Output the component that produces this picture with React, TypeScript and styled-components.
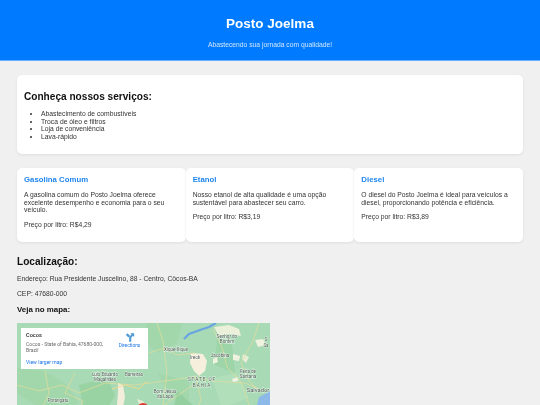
import styled, { createGlobalStyle } from "styled-components";

const GlobalStyle = createGlobalStyle`
  html, body {
    margin: 0;
    height: 405px;
    overflow: hidden;
    background: #f0f0f0;
    font-family: "Liberation Sans", Arial, sans-serif;
    color: #333;
  }
  #root {
    will-change: transform;
  }
`;

const Header = styled.header`
  background: #007bff;
  color: #fff;
  height: 61px;
  text-align: center;
  box-sizing: border-box;
  padding-top: 15px;
  border-bottom: 1px solid #66afff;
`;
const Title = styled.h1`
  margin: 0;
  font-size: 13.5px;
  line-height: 17px;
`;
const Tagline = styled.p`
  margin: 9px 0 0;
  font-size: 6.75px;
  line-height: 8px;
  color: #cfe5ff;
`;

const Main = styled.main`
  padding: 14px 17px 0;
`;
const Card = styled.section`
  background: #fff;
  border-radius: 5px;
  box-shadow: 0 1px 3px rgba(0, 0, 0, 0.08);
  box-sizing: border-box;
`;
const ServicesCard = styled(Card)`
  height: 79px;
  padding: 16px 7px 0;
`;
const SectionTitle = styled.h2`
  margin: 0;
  font-size: 10.1px;
  line-height: 12px;
  color: #111;
`;
const ServiceList = styled.ul`
  margin: 7px 0 0;
  padding: 0 0 0 17px;
  font-size: 6.75px;
  line-height: 7.7px;
`;
const Fuels = styled.div`
  display: grid;
  grid-template-columns: repeat(3, 1fr);
  margin-top: 14px;
`;
const FuelCard = styled(Card)`
  height: 74px;
  padding: 7px 7px 0;
`;
const FuelName = styled.h3`
  margin: 0;
  font-size: 7.8px;
  line-height: 10px;
  color: #1f86f0;
`;
const FuelText = styled.p`
  margin: 6px 0 0;
  font-size: 6.75px;
  line-height: 7.7px;
`;
const FuelPrice = styled(FuelText)`
  margin-top: 7px;
`;

const Location = styled.section`
  margin-top: 13px;
`;
const LocationTitle = styled.h2`
  margin: 0;
  font-size: 10.1px;
  line-height: 13px;
  color: #111;
`;
const LocationText = styled.p`
  margin: 7px 0 0;
  font-size: 6.75px;
  line-height: 8px;
`;
const MapTitle = styled.h3`
  margin: 7px 0 0;
  font-size: 7.9px;
  line-height: 10px;
  color: #111;
`;

const MapFrame = styled.div`
  position: relative;
  width: 253px;
  height: 120px;
  margin-top: 8px;
  background: #a8dab5;
  overflow: hidden;
`;
const MapDrawing = styled.svg`
  display: block;
`;
const MapLabel = styled.text<{ $size?: number; $spaced?: boolean }>`
  font-family: "Roboto", "Liberation Sans", sans-serif;
  font-size: ${(p) => p.$size ?? 4.5}px;
  letter-spacing: ${(p) => (p.$spaced ? "1px" : "0")};
  fill: #4c5a50;
  stroke: rgba(255, 255, 255, 0.75);
  stroke-width: 0.8px;
  paint-order: stroke;
  text-anchor: middle;
`;
const InfoCard = styled.div`
  position: absolute;
  left: 4px;
  top: 5px;
  width: 127px;
  height: 41px;
  background: #fff;
  box-sizing: border-box;
  padding: 4px 2px 4px 5px;
  display: grid;
  grid-template-columns: 1fr 33px;
  column-gap: 4px;
  font-family: "Roboto", "Liberation Sans", sans-serif;
`;
const PlaceName = styled.div`
  font-size: 5.6px;
  font-weight: 500;
  line-height: 6px;
  color: #222;
`;
const PlaceAddress = styled.div`
  font-size: 5.05px;
  line-height: 6px;
  margin-top: 3px;
  color: #666;
`;
const LargerMap = styled.a`
  display: block;
  font-size: 5.05px;
  line-height: 6px;
  margin-top: 6px;
  color: #1a73e8;
`;
const Directions = styled.div`
  display: flex;
  flex-direction: column;
  align-items: center;
  font-size: 4.8px;
  line-height: 6px;
  color: #1a73e8;
`;

const fuels = [
  {
    name: "Gasolina Comum",
    text: "A gasolina comum do Posto Joelma oferece excelente desempenho e economia para o seu veículo.",
    price: "R$4,29",
  },
  {
    name: "Etanol",
    text: "Nosso etanol de alta qualidade é uma opção sustentável para abastecer seu carro.",
    price: "R$3,19",
  },
  {
    name: "Diesel",
    text: "O diesel do Posto Joelma é ideal para veículos a diesel, proporcionando potência e eficiência.",
    price: "R$3,89",
  },
];

function BahiaMap() {
  return (
    <MapDrawing width="253" height="120" viewBox="0 0 253 120">
      <rect width="253" height="120" fill="#a8dab5" />
      {/* greener patches */}
      <path d="M0 45 L28 48 L50 62 L62 80 L40 90 L18 82 L0 70Z" fill="#a2d7ac" />
      <path d="M62 62 L90 55 L98 72 L88 90 L66 84Z" fill="#9ad3a3" />
      <path d="M130 0 L165 0 L160 20 L140 30 L128 18Z" fill="#a2d7ac" />
      <path d="M140 50 L172 58 L172 82 L150 66Z" fill="#a2d7ac" />
      <path d="M160 68 L178 84 L172 100 L156 90Z" fill="#94cf9f" />
      <path d="M195 55 L220 50 L232 75 L205 85Z" fill="#b0dfba" />
      <path d="M0 92 L30 90 L60 120 L0 120Z" fill="#b2e0bc" />
      <path d="M200 15 L215 22 L218 50 L198 42Z" fill="#9dd4a8" />
      {/* dry land */}
      <path d="M101 60 L106 62 L108 74 L106 84 L109 98 L106 120 L100 120 L102 98 L100 82 L101 68Z" fill="#f2eedb" />
      <path d="M120 76 L126 78 L130 83 L124 86Z" fill="#e4ecd2" />
      <path d="M174 30 L186 31 L190 38 L188 48 L182 53 L177 48 L173 40Z" fill="#f6efdc" />
      <path d="M197 4 L212 2 L222 6 L224 13 L212 11 L202 13Z" fill="#eaf0da" />
      <path d="M238 17 L246 16 L249 22 L241 24Z" fill="#eef2de" />
      <path d="M216 31 L223 33 L222 38 L216 37Z" fill="#eef2de" />
      <path d="M226 31 L232 34 L229 40 L225 36Z" fill="#e6efd6" />
      <path d="M196 36 L200 34 L201 39 L196 41Z" fill="#f0f2e0" />
      <path d="M194 84 L198 83 L197 88 L193 88Z" fill="#f2f3e4" />
      <path d="M215 56 L221 54 L221 58 L216 59Z" fill="#f2f3e4" />
      {/* water */}
      <path d="M240 82 L242 74 L248 71 L253 68 L253 82Z" fill="#8db9e8" />
      <path d="M167 16 L172 11 L183 7 L192 4 L199 0" fill="none" stroke="#6ba4e2" strokeWidth="2.2" />
      {/* roads */}
      <path
        d="M0 62 L22 68 L45 62 L62 70 L88 60 L118 62 L148 58 L176 54 L196 58 L228 60 L242 66
           M28 48 L32 70 L22 92 L30 120
           M58 50 L48 70 L66 78 L58 100
           M132 30 L148 25 L160 32 L178 30
           M140 0 L146 18 L150 50 L146 82
           M196 6 L205 24 L210 44 L225 60 L232 82
           M242 0 L236 18 L224 40 L232 58 L240 66
           M178 52 L184 76 L176 100
           M120 120 L150 80 L176 62"
        fill="none"
        stroke="#e5dc9a"
        strokeWidth="0.7"
      />
      <path d="M95 66 L108 62 L122 66 L130 58" fill="none" stroke="#efd98a" strokeWidth="0.9" />
      <circle cx="126" cy="86" r="6" fill="#d9392f" />
      <MapLabel x="210" y="15">Senhor do</MapLabel>
      <MapLabel x="210" y="20">Bonfim</MapLabel>
      <MapLabel x="249" y="18">S</MapLabel>
      <MapLabel x="249" y="24">Sa</MapLabel>
      <MapLabel x="159" y="28">Xique-Xique</MapLabel>
      <MapLabel x="178" y="36">Irecê</MapLabel>
      <MapLabel x="203" y="34">Jacobina</MapLabel>
      <MapLabel x="88" y="53">Luís Eduardo</MapLabel>
      <MapLabel x="88" y="58">Magalhães</MapLabel>
      <MapLabel x="117" y="53">Barreiras</MapLabel>
      <MapLabel x="185" y="57.5" $size={4.6} $spaced>STATE OF</MapLabel>
      <MapLabel x="185" y="63.5" $size={4.6} $spaced>BAHIA</MapLabel>
      <MapLabel x="231" y="50">Feira de</MapLabel>
      <MapLabel x="231" y="55">Santana</MapLabel>
      <MapLabel x="241" y="69" $size={5.8}>Salvador</MapLabel>
      <MapLabel x="148" y="70">Bom Jesus</MapLabel>
      <MapLabel x="148" y="75">da Lapa</MapLabel>
      <MapLabel x="41" y="79">Porangatu</MapLabel>
    </MapDrawing>
  );
}

export default function App() {
  return (
    <>
      <GlobalStyle />
      <Header>
        <Title>Posto Joelma</Title>
        <Tagline>Abastecendo sua jornada com qualidade!</Tagline>
      </Header>
      <Main>
        <ServicesCard>
          <SectionTitle>Conheça nossos serviços:</SectionTitle>
          <ServiceList>
            <li>Abastecimento de combustíveis</li>
            <li>Troca de óleo e filtros</li>
            <li>Loja de conveniência</li>
            <li>Lava-rápido</li>
          </ServiceList>
        </ServicesCard>
        <Fuels>
          {fuels.map((f) => (
            <FuelCard key={f.name}>
              <FuelName>{f.name}</FuelName>
              <FuelText>{f.text}</FuelText>
              <FuelPrice>Preço por litro: {f.price}</FuelPrice>
            </FuelCard>
          ))}
        </Fuels>
        <Location>
          <LocationTitle>Localização:</LocationTitle>
          <LocationText>Endereço: Rua Presidente Juscelino, 88 - Centro, Côcos-BA</LocationText>
          <LocationText>CEP: 47680-000</LocationText>
          <MapTitle>Veja no mapa:</MapTitle>
          <MapFrame>
            <BahiaMap />
            <InfoCard>
              <div>
                <PlaceName>Cocos</PlaceName>
                <PlaceAddress>Cocos - State of Bahia, 47680-000, Brazil</PlaceAddress>
                <LargerMap>View larger map</LargerMap>
              </div>
              <Directions>
                <svg width="10" height="11" viewBox="0 0 24 24" fill="#4f9ad6">
                  <path d="M13 2h9v9l-3-3-4 4.5V22h-5v-11l5.5-6zM2 6l4-4 6 6-3.5 4z" />
                </svg>
                Directions
              </Directions>
            </InfoCard>
          </MapFrame>
        </Location>
      </Main>
    </>
  );
}
